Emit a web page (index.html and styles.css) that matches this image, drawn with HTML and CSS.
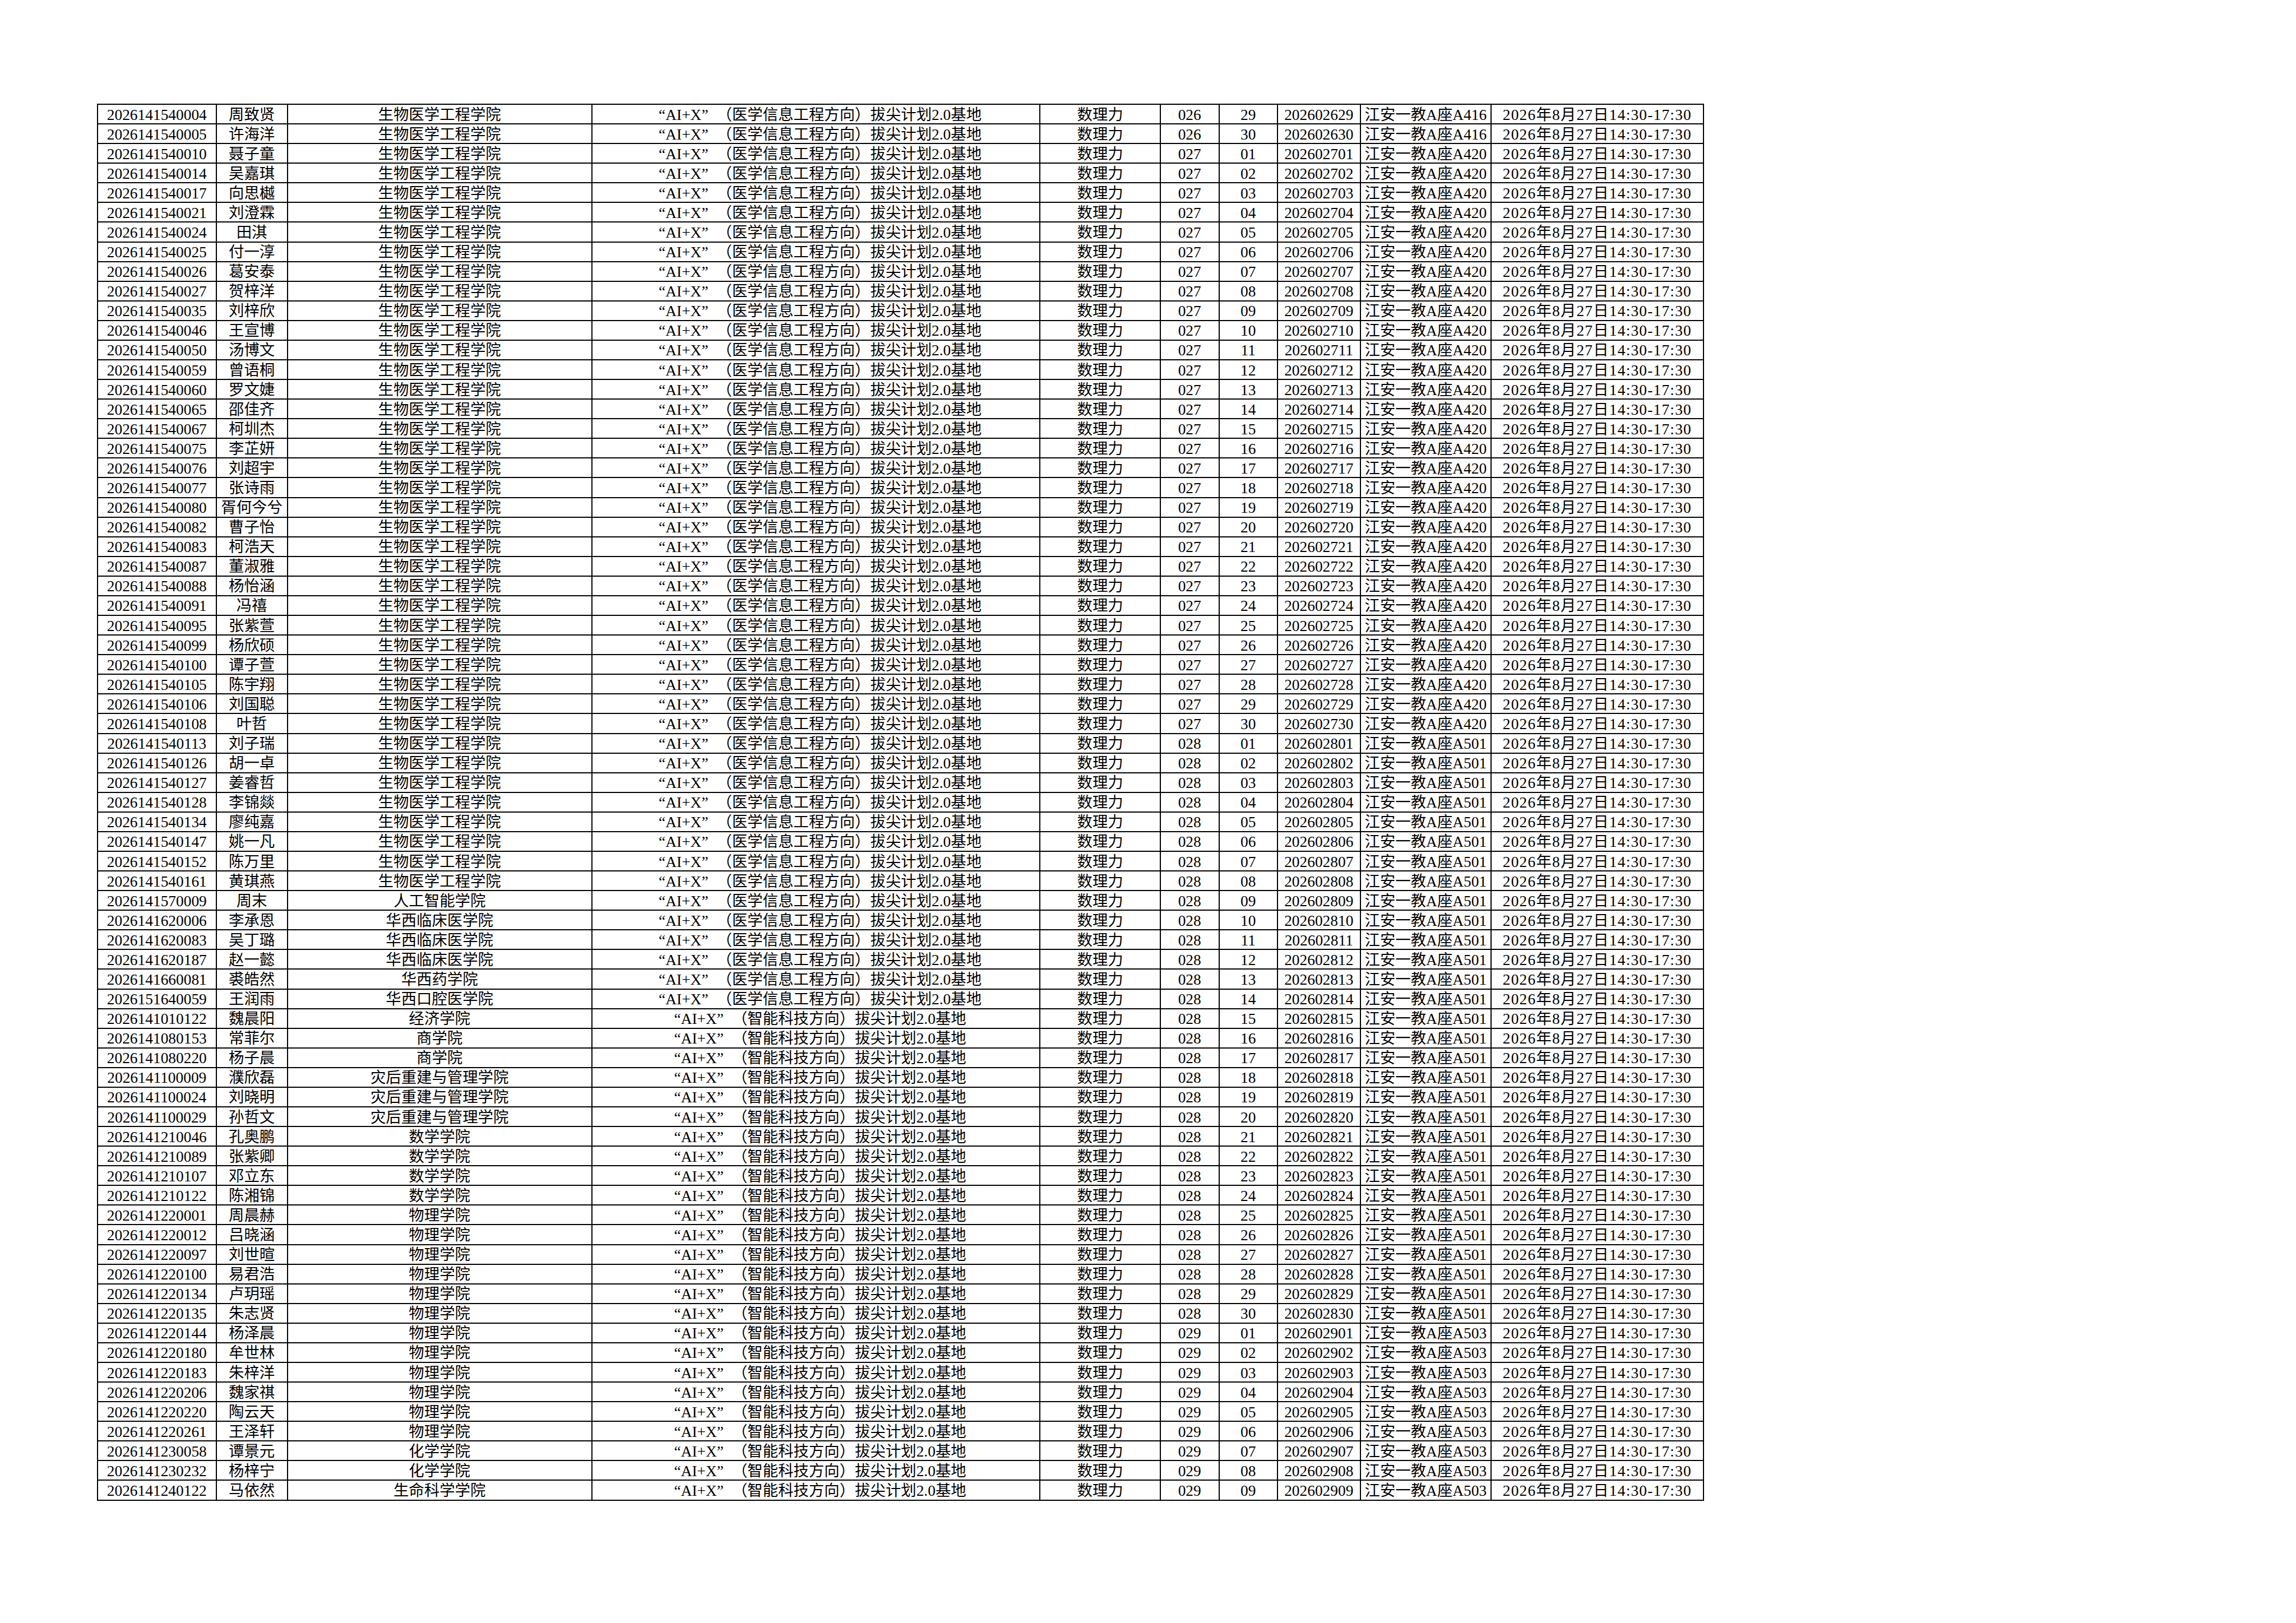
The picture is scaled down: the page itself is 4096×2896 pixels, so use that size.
FILE: index.html
```html
<!DOCTYPE html>
<html lang="zh-CN">
<head>
<meta charset="utf-8">
<title>考场安排</title>
<link rel="stylesheet" href="styles.css">
</head>
<body>
<div class="page">
<table class="sheet">
<colgroup>
<col class="c-id"><col class="c-name"><col class="c-school"><col class="c-proj"><col class="c-subj"><col class="c-room"><col class="c-seat"><col class="c-no"><col class="c-place"><col class="c-time">
</colgroup>
<tbody>
<tr><td>2026141540004</td><td>周致贤</td><td>生物医学工程学院</td><td><span class="lq">“</span>AI+X<span class="rq">”</span>（医学信息工程方向）拔尖计划2.0基地</td><td>数理力</td><td>026</td><td>29</td><td>202602629</td><td>江安一教A座A416</td><td class="time">2026年8月27日14:30-17:30</td></tr>
<tr><td>2026141540005</td><td>许海洋</td><td>生物医学工程学院</td><td><span class="lq">“</span>AI+X<span class="rq">”</span>（医学信息工程方向）拔尖计划2.0基地</td><td>数理力</td><td>026</td><td>30</td><td>202602630</td><td>江安一教A座A416</td><td class="time">2026年8月27日14:30-17:30</td></tr>
<tr><td>2026141540010</td><td>聂子童</td><td>生物医学工程学院</td><td><span class="lq">“</span>AI+X<span class="rq">”</span>（医学信息工程方向）拔尖计划2.0基地</td><td>数理力</td><td>027</td><td>01</td><td>202602701</td><td>江安一教A座A420</td><td class="time">2026年8月27日14:30-17:30</td></tr>
<tr><td>2026141540014</td><td>吴嘉琪</td><td>生物医学工程学院</td><td><span class="lq">“</span>AI+X<span class="rq">”</span>（医学信息工程方向）拔尖计划2.0基地</td><td>数理力</td><td>027</td><td>02</td><td>202602702</td><td>江安一教A座A420</td><td class="time">2026年8月27日14:30-17:30</td></tr>
<tr><td>2026141540017</td><td>向思樾</td><td>生物医学工程学院</td><td><span class="lq">“</span>AI+X<span class="rq">”</span>（医学信息工程方向）拔尖计划2.0基地</td><td>数理力</td><td>027</td><td>03</td><td>202602703</td><td>江安一教A座A420</td><td class="time">2026年8月27日14:30-17:30</td></tr>
<tr><td>2026141540021</td><td>刘澄霖</td><td>生物医学工程学院</td><td><span class="lq">“</span>AI+X<span class="rq">”</span>（医学信息工程方向）拔尖计划2.0基地</td><td>数理力</td><td>027</td><td>04</td><td>202602704</td><td>江安一教A座A420</td><td class="time">2026年8月27日14:30-17:30</td></tr>
<tr><td>2026141540024</td><td>田淇</td><td>生物医学工程学院</td><td><span class="lq">“</span>AI+X<span class="rq">”</span>（医学信息工程方向）拔尖计划2.0基地</td><td>数理力</td><td>027</td><td>05</td><td>202602705</td><td>江安一教A座A420</td><td class="time">2026年8月27日14:30-17:30</td></tr>
<tr><td>2026141540025</td><td>付一淳</td><td>生物医学工程学院</td><td><span class="lq">“</span>AI+X<span class="rq">”</span>（医学信息工程方向）拔尖计划2.0基地</td><td>数理力</td><td>027</td><td>06</td><td>202602706</td><td>江安一教A座A420</td><td class="time">2026年8月27日14:30-17:30</td></tr>
<tr><td>2026141540026</td><td>葛安泰</td><td>生物医学工程学院</td><td><span class="lq">“</span>AI+X<span class="rq">”</span>（医学信息工程方向）拔尖计划2.0基地</td><td>数理力</td><td>027</td><td>07</td><td>202602707</td><td>江安一教A座A420</td><td class="time">2026年8月27日14:30-17:30</td></tr>
<tr><td>2026141540027</td><td>贺梓洋</td><td>生物医学工程学院</td><td><span class="lq">“</span>AI+X<span class="rq">”</span>（医学信息工程方向）拔尖计划2.0基地</td><td>数理力</td><td>027</td><td>08</td><td>202602708</td><td>江安一教A座A420</td><td class="time">2026年8月27日14:30-17:30</td></tr>
<tr><td>2026141540035</td><td>刘梓欣</td><td>生物医学工程学院</td><td><span class="lq">“</span>AI+X<span class="rq">”</span>（医学信息工程方向）拔尖计划2.0基地</td><td>数理力</td><td>027</td><td>09</td><td>202602709</td><td>江安一教A座A420</td><td class="time">2026年8月27日14:30-17:30</td></tr>
<tr><td>2026141540046</td><td>王宣博</td><td>生物医学工程学院</td><td><span class="lq">“</span>AI+X<span class="rq">”</span>（医学信息工程方向）拔尖计划2.0基地</td><td>数理力</td><td>027</td><td>10</td><td>202602710</td><td>江安一教A座A420</td><td class="time">2026年8月27日14:30-17:30</td></tr>
<tr><td>2026141540050</td><td>汤博文</td><td>生物医学工程学院</td><td><span class="lq">“</span>AI+X<span class="rq">”</span>（医学信息工程方向）拔尖计划2.0基地</td><td>数理力</td><td>027</td><td>11</td><td>202602711</td><td>江安一教A座A420</td><td class="time">2026年8月27日14:30-17:30</td></tr>
<tr><td>2026141540059</td><td>曾语桐</td><td>生物医学工程学院</td><td><span class="lq">“</span>AI+X<span class="rq">”</span>（医学信息工程方向）拔尖计划2.0基地</td><td>数理力</td><td>027</td><td>12</td><td>202602712</td><td>江安一教A座A420</td><td class="time">2026年8月27日14:30-17:30</td></tr>
<tr><td>2026141540060</td><td>罗文婕</td><td>生物医学工程学院</td><td><span class="lq">“</span>AI+X<span class="rq">”</span>（医学信息工程方向）拔尖计划2.0基地</td><td>数理力</td><td>027</td><td>13</td><td>202602713</td><td>江安一教A座A420</td><td class="time">2026年8月27日14:30-17:30</td></tr>
<tr><td>2026141540065</td><td>邵佳齐</td><td>生物医学工程学院</td><td><span class="lq">“</span>AI+X<span class="rq">”</span>（医学信息工程方向）拔尖计划2.0基地</td><td>数理力</td><td>027</td><td>14</td><td>202602714</td><td>江安一教A座A420</td><td class="time">2026年8月27日14:30-17:30</td></tr>
<tr><td>2026141540067</td><td>柯圳杰</td><td>生物医学工程学院</td><td><span class="lq">“</span>AI+X<span class="rq">”</span>（医学信息工程方向）拔尖计划2.0基地</td><td>数理力</td><td>027</td><td>15</td><td>202602715</td><td>江安一教A座A420</td><td class="time">2026年8月27日14:30-17:30</td></tr>
<tr><td>2026141540075</td><td>李芷妍</td><td>生物医学工程学院</td><td><span class="lq">“</span>AI+X<span class="rq">”</span>（医学信息工程方向）拔尖计划2.0基地</td><td>数理力</td><td>027</td><td>16</td><td>202602716</td><td>江安一教A座A420</td><td class="time">2026年8月27日14:30-17:30</td></tr>
<tr><td>2026141540076</td><td>刘超宇</td><td>生物医学工程学院</td><td><span class="lq">“</span>AI+X<span class="rq">”</span>（医学信息工程方向）拔尖计划2.0基地</td><td>数理力</td><td>027</td><td>17</td><td>202602717</td><td>江安一教A座A420</td><td class="time">2026年8月27日14:30-17:30</td></tr>
<tr><td>2026141540077</td><td>张诗雨</td><td>生物医学工程学院</td><td><span class="lq">“</span>AI+X<span class="rq">”</span>（医学信息工程方向）拔尖计划2.0基地</td><td>数理力</td><td>027</td><td>18</td><td>202602718</td><td>江安一教A座A420</td><td class="time">2026年8月27日14:30-17:30</td></tr>
<tr><td>2026141540080</td><td>胥何今兮</td><td>生物医学工程学院</td><td><span class="lq">“</span>AI+X<span class="rq">”</span>（医学信息工程方向）拔尖计划2.0基地</td><td>数理力</td><td>027</td><td>19</td><td>202602719</td><td>江安一教A座A420</td><td class="time">2026年8月27日14:30-17:30</td></tr>
<tr><td>2026141540082</td><td>曹子怡</td><td>生物医学工程学院</td><td><span class="lq">“</span>AI+X<span class="rq">”</span>（医学信息工程方向）拔尖计划2.0基地</td><td>数理力</td><td>027</td><td>20</td><td>202602720</td><td>江安一教A座A420</td><td class="time">2026年8月27日14:30-17:30</td></tr>
<tr><td>2026141540083</td><td>柯浩天</td><td>生物医学工程学院</td><td><span class="lq">“</span>AI+X<span class="rq">”</span>（医学信息工程方向）拔尖计划2.0基地</td><td>数理力</td><td>027</td><td>21</td><td>202602721</td><td>江安一教A座A420</td><td class="time">2026年8月27日14:30-17:30</td></tr>
<tr><td>2026141540087</td><td>董淑雅</td><td>生物医学工程学院</td><td><span class="lq">“</span>AI+X<span class="rq">”</span>（医学信息工程方向）拔尖计划2.0基地</td><td>数理力</td><td>027</td><td>22</td><td>202602722</td><td>江安一教A座A420</td><td class="time">2026年8月27日14:30-17:30</td></tr>
<tr><td>2026141540088</td><td>杨怡涵</td><td>生物医学工程学院</td><td><span class="lq">“</span>AI+X<span class="rq">”</span>（医学信息工程方向）拔尖计划2.0基地</td><td>数理力</td><td>027</td><td>23</td><td>202602723</td><td>江安一教A座A420</td><td class="time">2026年8月27日14:30-17:30</td></tr>
<tr><td>2026141540091</td><td>冯禧</td><td>生物医学工程学院</td><td><span class="lq">“</span>AI+X<span class="rq">”</span>（医学信息工程方向）拔尖计划2.0基地</td><td>数理力</td><td>027</td><td>24</td><td>202602724</td><td>江安一教A座A420</td><td class="time">2026年8月27日14:30-17:30</td></tr>
<tr><td>2026141540095</td><td>张紫萱</td><td>生物医学工程学院</td><td><span class="lq">“</span>AI+X<span class="rq">”</span>（医学信息工程方向）拔尖计划2.0基地</td><td>数理力</td><td>027</td><td>25</td><td>202602725</td><td>江安一教A座A420</td><td class="time">2026年8月27日14:30-17:30</td></tr>
<tr><td>2026141540099</td><td>杨欣硕</td><td>生物医学工程学院</td><td><span class="lq">“</span>AI+X<span class="rq">”</span>（医学信息工程方向）拔尖计划2.0基地</td><td>数理力</td><td>027</td><td>26</td><td>202602726</td><td>江安一教A座A420</td><td class="time">2026年8月27日14:30-17:30</td></tr>
<tr><td>2026141540100</td><td>谭子萱</td><td>生物医学工程学院</td><td><span class="lq">“</span>AI+X<span class="rq">”</span>（医学信息工程方向）拔尖计划2.0基地</td><td>数理力</td><td>027</td><td>27</td><td>202602727</td><td>江安一教A座A420</td><td class="time">2026年8月27日14:30-17:30</td></tr>
<tr><td>2026141540105</td><td>陈宇翔</td><td>生物医学工程学院</td><td><span class="lq">“</span>AI+X<span class="rq">”</span>（医学信息工程方向）拔尖计划2.0基地</td><td>数理力</td><td>027</td><td>28</td><td>202602728</td><td>江安一教A座A420</td><td class="time">2026年8月27日14:30-17:30</td></tr>
<tr><td>2026141540106</td><td>刘国聪</td><td>生物医学工程学院</td><td><span class="lq">“</span>AI+X<span class="rq">”</span>（医学信息工程方向）拔尖计划2.0基地</td><td>数理力</td><td>027</td><td>29</td><td>202602729</td><td>江安一教A座A420</td><td class="time">2026年8月27日14:30-17:30</td></tr>
<tr><td>2026141540108</td><td>叶哲</td><td>生物医学工程学院</td><td><span class="lq">“</span>AI+X<span class="rq">”</span>（医学信息工程方向）拔尖计划2.0基地</td><td>数理力</td><td>027</td><td>30</td><td>202602730</td><td>江安一教A座A420</td><td class="time">2026年8月27日14:30-17:30</td></tr>
<tr><td>2026141540113</td><td>刘子瑞</td><td>生物医学工程学院</td><td><span class="lq">“</span>AI+X<span class="rq">”</span>（医学信息工程方向）拔尖计划2.0基地</td><td>数理力</td><td>028</td><td>01</td><td>202602801</td><td>江安一教A座A501</td><td class="time">2026年8月27日14:30-17:30</td></tr>
<tr><td>2026141540126</td><td>胡一卓</td><td>生物医学工程学院</td><td><span class="lq">“</span>AI+X<span class="rq">”</span>（医学信息工程方向）拔尖计划2.0基地</td><td>数理力</td><td>028</td><td>02</td><td>202602802</td><td>江安一教A座A501</td><td class="time">2026年8月27日14:30-17:30</td></tr>
<tr><td>2026141540127</td><td>姜睿哲</td><td>生物医学工程学院</td><td><span class="lq">“</span>AI+X<span class="rq">”</span>（医学信息工程方向）拔尖计划2.0基地</td><td>数理力</td><td>028</td><td>03</td><td>202602803</td><td>江安一教A座A501</td><td class="time">2026年8月27日14:30-17:30</td></tr>
<tr><td>2026141540128</td><td>李锦燚</td><td>生物医学工程学院</td><td><span class="lq">“</span>AI+X<span class="rq">”</span>（医学信息工程方向）拔尖计划2.0基地</td><td>数理力</td><td>028</td><td>04</td><td>202602804</td><td>江安一教A座A501</td><td class="time">2026年8月27日14:30-17:30</td></tr>
<tr><td>2026141540134</td><td>廖纯嘉</td><td>生物医学工程学院</td><td><span class="lq">“</span>AI+X<span class="rq">”</span>（医学信息工程方向）拔尖计划2.0基地</td><td>数理力</td><td>028</td><td>05</td><td>202602805</td><td>江安一教A座A501</td><td class="time">2026年8月27日14:30-17:30</td></tr>
<tr><td>2026141540147</td><td>姚一凡</td><td>生物医学工程学院</td><td><span class="lq">“</span>AI+X<span class="rq">”</span>（医学信息工程方向）拔尖计划2.0基地</td><td>数理力</td><td>028</td><td>06</td><td>202602806</td><td>江安一教A座A501</td><td class="time">2026年8月27日14:30-17:30</td></tr>
<tr><td>2026141540152</td><td>陈万里</td><td>生物医学工程学院</td><td><span class="lq">“</span>AI+X<span class="rq">”</span>（医学信息工程方向）拔尖计划2.0基地</td><td>数理力</td><td>028</td><td>07</td><td>202602807</td><td>江安一教A座A501</td><td class="time">2026年8月27日14:30-17:30</td></tr>
<tr><td>2026141540161</td><td>黄琪燕</td><td>生物医学工程学院</td><td><span class="lq">“</span>AI+X<span class="rq">”</span>（医学信息工程方向）拔尖计划2.0基地</td><td>数理力</td><td>028</td><td>08</td><td>202602808</td><td>江安一教A座A501</td><td class="time">2026年8月27日14:30-17:30</td></tr>
<tr><td>2026141570009</td><td>周末</td><td>人工智能学院</td><td><span class="lq">“</span>AI+X<span class="rq">”</span>（医学信息工程方向）拔尖计划2.0基地</td><td>数理力</td><td>028</td><td>09</td><td>202602809</td><td>江安一教A座A501</td><td class="time">2026年8月27日14:30-17:30</td></tr>
<tr><td>2026141620006</td><td>李承恩</td><td>华西临床医学院</td><td><span class="lq">“</span>AI+X<span class="rq">”</span>（医学信息工程方向）拔尖计划2.0基地</td><td>数理力</td><td>028</td><td>10</td><td>202602810</td><td>江安一教A座A501</td><td class="time">2026年8月27日14:30-17:30</td></tr>
<tr><td>2026141620083</td><td>吴丁璐</td><td>华西临床医学院</td><td><span class="lq">“</span>AI+X<span class="rq">”</span>（医学信息工程方向）拔尖计划2.0基地</td><td>数理力</td><td>028</td><td>11</td><td>202602811</td><td>江安一教A座A501</td><td class="time">2026年8月27日14:30-17:30</td></tr>
<tr><td>2026141620187</td><td>赵一懿</td><td>华西临床医学院</td><td><span class="lq">“</span>AI+X<span class="rq">”</span>（医学信息工程方向）拔尖计划2.0基地</td><td>数理力</td><td>028</td><td>12</td><td>202602812</td><td>江安一教A座A501</td><td class="time">2026年8月27日14:30-17:30</td></tr>
<tr><td>2026141660081</td><td>裘皓然</td><td>华西药学院</td><td><span class="lq">“</span>AI+X<span class="rq">”</span>（医学信息工程方向）拔尖计划2.0基地</td><td>数理力</td><td>028</td><td>13</td><td>202602813</td><td>江安一教A座A501</td><td class="time">2026年8月27日14:30-17:30</td></tr>
<tr><td>2026151640059</td><td>王润雨</td><td>华西口腔医学院</td><td><span class="lq">“</span>AI+X<span class="rq">”</span>（医学信息工程方向）拔尖计划2.0基地</td><td>数理力</td><td>028</td><td>14</td><td>202602814</td><td>江安一教A座A501</td><td class="time">2026年8月27日14:30-17:30</td></tr>
<tr><td>2026141010122</td><td>魏晨阳</td><td>经济学院</td><td><span class="lq">“</span>AI+X<span class="rq">”</span>（智能科技方向）拔尖计划2.0基地</td><td>数理力</td><td>028</td><td>15</td><td>202602815</td><td>江安一教A座A501</td><td class="time">2026年8月27日14:30-17:30</td></tr>
<tr><td>2026141080153</td><td>常菲尔</td><td>商学院</td><td><span class="lq">“</span>AI+X<span class="rq">”</span>（智能科技方向）拔尖计划2.0基地</td><td>数理力</td><td>028</td><td>16</td><td>202602816</td><td>江安一教A座A501</td><td class="time">2026年8月27日14:30-17:30</td></tr>
<tr><td>2026141080220</td><td>杨子晨</td><td>商学院</td><td><span class="lq">“</span>AI+X<span class="rq">”</span>（智能科技方向）拔尖计划2.0基地</td><td>数理力</td><td>028</td><td>17</td><td>202602817</td><td>江安一教A座A501</td><td class="time">2026年8月27日14:30-17:30</td></tr>
<tr><td>2026141100009</td><td>濮欣磊</td><td>灾后重建与管理学院</td><td><span class="lq">“</span>AI+X<span class="rq">”</span>（智能科技方向）拔尖计划2.0基地</td><td>数理力</td><td>028</td><td>18</td><td>202602818</td><td>江安一教A座A501</td><td class="time">2026年8月27日14:30-17:30</td></tr>
<tr><td>2026141100024</td><td>刘晓明</td><td>灾后重建与管理学院</td><td><span class="lq">“</span>AI+X<span class="rq">”</span>（智能科技方向）拔尖计划2.0基地</td><td>数理力</td><td>028</td><td>19</td><td>202602819</td><td>江安一教A座A501</td><td class="time">2026年8月27日14:30-17:30</td></tr>
<tr><td>2026141100029</td><td>孙哲文</td><td>灾后重建与管理学院</td><td><span class="lq">“</span>AI+X<span class="rq">”</span>（智能科技方向）拔尖计划2.0基地</td><td>数理力</td><td>028</td><td>20</td><td>202602820</td><td>江安一教A座A501</td><td class="time">2026年8月27日14:30-17:30</td></tr>
<tr><td>2026141210046</td><td>孔奥鹏</td><td>数学学院</td><td><span class="lq">“</span>AI+X<span class="rq">”</span>（智能科技方向）拔尖计划2.0基地</td><td>数理力</td><td>028</td><td>21</td><td>202602821</td><td>江安一教A座A501</td><td class="time">2026年8月27日14:30-17:30</td></tr>
<tr><td>2026141210089</td><td>张紫卿</td><td>数学学院</td><td><span class="lq">“</span>AI+X<span class="rq">”</span>（智能科技方向）拔尖计划2.0基地</td><td>数理力</td><td>028</td><td>22</td><td>202602822</td><td>江安一教A座A501</td><td class="time">2026年8月27日14:30-17:30</td></tr>
<tr><td>2026141210107</td><td>邓立东</td><td>数学学院</td><td><span class="lq">“</span>AI+X<span class="rq">”</span>（智能科技方向）拔尖计划2.0基地</td><td>数理力</td><td>028</td><td>23</td><td>202602823</td><td>江安一教A座A501</td><td class="time">2026年8月27日14:30-17:30</td></tr>
<tr><td>2026141210122</td><td>陈湘锦</td><td>数学学院</td><td><span class="lq">“</span>AI+X<span class="rq">”</span>（智能科技方向）拔尖计划2.0基地</td><td>数理力</td><td>028</td><td>24</td><td>202602824</td><td>江安一教A座A501</td><td class="time">2026年8月27日14:30-17:30</td></tr>
<tr><td>2026141220001</td><td>周晨赫</td><td>物理学院</td><td><span class="lq">“</span>AI+X<span class="rq">”</span>（智能科技方向）拔尖计划2.0基地</td><td>数理力</td><td>028</td><td>25</td><td>202602825</td><td>江安一教A座A501</td><td class="time">2026年8月27日14:30-17:30</td></tr>
<tr><td>2026141220012</td><td>吕晓涵</td><td>物理学院</td><td><span class="lq">“</span>AI+X<span class="rq">”</span>（智能科技方向）拔尖计划2.0基地</td><td>数理力</td><td>028</td><td>26</td><td>202602826</td><td>江安一教A座A501</td><td class="time">2026年8月27日14:30-17:30</td></tr>
<tr><td>2026141220097</td><td>刘世暄</td><td>物理学院</td><td><span class="lq">“</span>AI+X<span class="rq">”</span>（智能科技方向）拔尖计划2.0基地</td><td>数理力</td><td>028</td><td>27</td><td>202602827</td><td>江安一教A座A501</td><td class="time">2026年8月27日14:30-17:30</td></tr>
<tr><td>2026141220100</td><td>易君浩</td><td>物理学院</td><td><span class="lq">“</span>AI+X<span class="rq">”</span>（智能科技方向）拔尖计划2.0基地</td><td>数理力</td><td>028</td><td>28</td><td>202602828</td><td>江安一教A座A501</td><td class="time">2026年8月27日14:30-17:30</td></tr>
<tr><td>2026141220134</td><td>卢玥瑶</td><td>物理学院</td><td><span class="lq">“</span>AI+X<span class="rq">”</span>（智能科技方向）拔尖计划2.0基地</td><td>数理力</td><td>028</td><td>29</td><td>202602829</td><td>江安一教A座A501</td><td class="time">2026年8月27日14:30-17:30</td></tr>
<tr><td>2026141220135</td><td>朱志贤</td><td>物理学院</td><td><span class="lq">“</span>AI+X<span class="rq">”</span>（智能科技方向）拔尖计划2.0基地</td><td>数理力</td><td>028</td><td>30</td><td>202602830</td><td>江安一教A座A501</td><td class="time">2026年8月27日14:30-17:30</td></tr>
<tr><td>2026141220144</td><td>杨泽晨</td><td>物理学院</td><td><span class="lq">“</span>AI+X<span class="rq">”</span>（智能科技方向）拔尖计划2.0基地</td><td>数理力</td><td>029</td><td>01</td><td>202602901</td><td>江安一教A座A503</td><td class="time">2026年8月27日14:30-17:30</td></tr>
<tr><td>2026141220180</td><td>牟世林</td><td>物理学院</td><td><span class="lq">“</span>AI+X<span class="rq">”</span>（智能科技方向）拔尖计划2.0基地</td><td>数理力</td><td>029</td><td>02</td><td>202602902</td><td>江安一教A座A503</td><td class="time">2026年8月27日14:30-17:30</td></tr>
<tr><td>2026141220183</td><td>朱梓洋</td><td>物理学院</td><td><span class="lq">“</span>AI+X<span class="rq">”</span>（智能科技方向）拔尖计划2.0基地</td><td>数理力</td><td>029</td><td>03</td><td>202602903</td><td>江安一教A座A503</td><td class="time">2026年8月27日14:30-17:30</td></tr>
<tr><td>2026141220206</td><td>魏家祺</td><td>物理学院</td><td><span class="lq">“</span>AI+X<span class="rq">”</span>（智能科技方向）拔尖计划2.0基地</td><td>数理力</td><td>029</td><td>04</td><td>202602904</td><td>江安一教A座A503</td><td class="time">2026年8月27日14:30-17:30</td></tr>
<tr><td>2026141220220</td><td>陶云天</td><td>物理学院</td><td><span class="lq">“</span>AI+X<span class="rq">”</span>（智能科技方向）拔尖计划2.0基地</td><td>数理力</td><td>029</td><td>05</td><td>202602905</td><td>江安一教A座A503</td><td class="time">2026年8月27日14:30-17:30</td></tr>
<tr><td>2026141220261</td><td>王泽轩</td><td>物理学院</td><td><span class="lq">“</span>AI+X<span class="rq">”</span>（智能科技方向）拔尖计划2.0基地</td><td>数理力</td><td>029</td><td>06</td><td>202602906</td><td>江安一教A座A503</td><td class="time">2026年8月27日14:30-17:30</td></tr>
<tr><td>2026141230058</td><td>谭景元</td><td>化学学院</td><td><span class="lq">“</span>AI+X<span class="rq">”</span>（智能科技方向）拔尖计划2.0基地</td><td>数理力</td><td>029</td><td>07</td><td>202602907</td><td>江安一教A座A503</td><td class="time">2026年8月27日14:30-17:30</td></tr>
<tr><td>2026141230232</td><td>杨梓宁</td><td>化学学院</td><td><span class="lq">“</span>AI+X<span class="rq">”</span>（智能科技方向）拔尖计划2.0基地</td><td>数理力</td><td>029</td><td>08</td><td>202602908</td><td>江安一教A座A503</td><td class="time">2026年8月27日14:30-17:30</td></tr>
<tr><td>2026141240122</td><td>马依然</td><td>生命科学学院</td><td><span class="lq">“</span>AI+X<span class="rq">”</span>（智能科技方向）拔尖计划2.0基地</td><td>数理力</td><td>029</td><td>09</td><td>202602909</td><td>江安一教A座A503</td><td class="time">2026年8月27日14:30-17:30</td></tr>
</tbody>
</table>
</div>
</body>
</html>
```

FILE: styles.css
```css
html, body {
  margin: 0;
  padding: 0;
  background: #ffffff;
}

.page {
  padding: 185px 0 0 173px;
}

.sheet {
  border-collapse: collapse;
  table-layout: fixed;
  width: 2865px;
  font-family: "Liberation Serif", "Noto Sans CJK SC", serif;
  font-size: 27.4px;
  color: #000000;
  text-spacing-trim: space-all;
}

.c-id { width: 211.6px; }
.c-name { width: 127px; }
.c-school { width: 543.1px; }
.c-proj { width: 799.8px; }
.c-subj { width: 214.2px; }
.c-room { width: 105.1px; }
.c-seat { width: 103.8px; }
.c-no { width: 148.4px; }
.c-place { width: 232.8px; }
.c-time { width: 379.3px; }

.sheet tr {
  height: 35.09px;
}

.sheet td {
  border: 2px solid #000000;
  padding: 3px 0 0 0;
  line-height: 29px;
  text-align: center;
  vertical-align: middle;
  white-space: nowrap;
}

.sheet .lq {
  padding-left: 15px;
}

.sheet .rq {
  padding-right: 15px;
}

.sheet .time {
  letter-spacing: 1.2px;
}
```
